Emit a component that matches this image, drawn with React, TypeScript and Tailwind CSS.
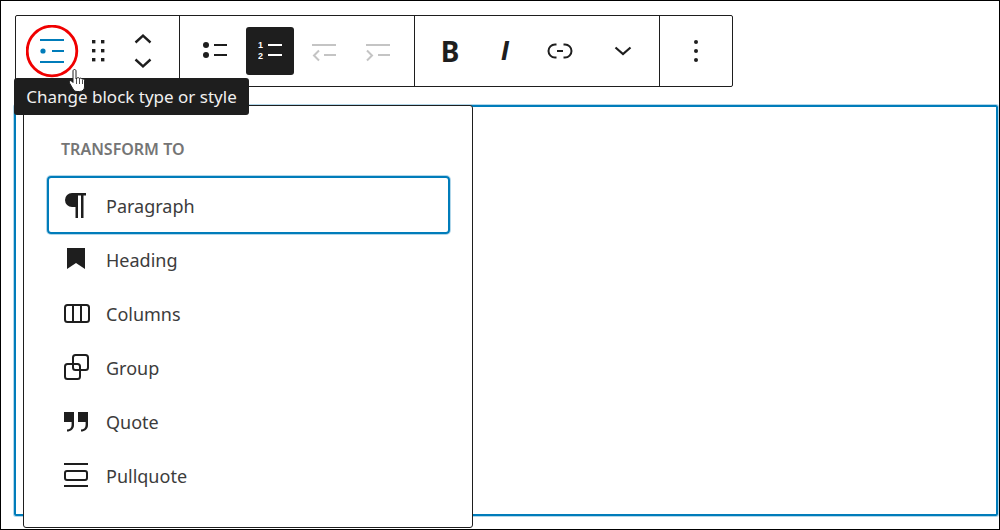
import React from 'react';

const FONT = "font-['Noto_Sans',sans-serif]";
const BLUE = '#007cba';
const DARK = '#1e1e1e';

const BlockIcon = () => (
  <svg width="24" height="24" viewBox="0 0 24 24" fill={BLUE}>
    <rect x="0" y="0" width="24" height="2" />
    <circle cx="3" cy="12" r="2.6" />
    <rect x="12" y="11" width="12" height="2" />
    <rect x="0" y="22" width="24" height="2" />
  </svg>
);

const DragIcon = () => (
  <svg width="13" height="22" viewBox="0 0 13 22" fill={DARK}>
    <rect x="0" y="0" width="3.4" height="3.4" />
    <rect x="9" y="0" width="3.4" height="3.4" />
    <rect x="0" y="9" width="3.4" height="3.4" />
    <rect x="9" y="9" width="3.4" height="3.4" />
    <rect x="0" y="18" width="3.4" height="3.4" />
    <rect x="9" y="18" width="3.4" height="3.4" />
  </svg>
);

const MoverIcon = () => (
  <svg width="18" height="34" viewBox="0 0 18 34" fill="none" stroke={DARK} strokeWidth="2.4">
    <path d="M1.500 8.500 9 1.700l7.500 6.800" />
    <path d="M1.500 25.500 9 32.300l7.500-6.800" />
  </svg>
);

const ListIcon = () => (
  <svg width="24" height="24" viewBox="0 0 24 24" fill={DARK}>
    <circle cx="3" cy="6" r="3" />
    <circle cx="3" cy="16" r="3" />
    <rect x="11" y="5" width="13" height="2" />
    <rect x="11" y="15" width="13" height="2" />
  </svg>
);

const NumberedIcon = () => (
  <svg width="24" height="24" viewBox="0 0 24 24" fill="#fff">
    <text x="0" y="9" fontSize="9" fontWeight="700" fontFamily="Liberation Sans, sans-serif">1</text>
    <text x="0" y="20" fontSize="9" fontWeight="700" fontFamily="Liberation Sans, sans-serif">2</text>
    <rect x="10" y="5" width="14" height="2" />
    <rect x="10" y="15" width="14" height="2" />
  </svg>
);

const OutdentIcon = () => (
  <svg width="24" height="24" viewBox="0 0 24 24" fill="#c4c4c4">
    <rect x="0" y="5" width="24" height="2" />
    <rect x="12" y="15" width="12" height="2" />
    <path d="M7 11.500 2 16.500l5 5" fill="none" stroke="#c4c4c4" strokeWidth="2" />
  </svg>
);

const IndentIcon = () => (
  <svg width="24" height="24" viewBox="0 0 24 24" fill="#c4c4c4">
    <rect x="0" y="5" width="24" height="2" />
    <rect x="12" y="15" width="12" height="2" />
    <path d="M1 11.500l5 5-5 5" fill="none" stroke="#c4c4c4" strokeWidth="2" />
  </svg>
);

const LinkIcon = () => (
  <svg width="28" height="18" viewBox="0 0 28 18" fill="none" stroke={DARK} strokeWidth="2">
    <path d="M10.500 2.500H9a6.500 6.500 0 0 0 0 13h1.500" />
    <path d="M17.500 2.500H19a6.500 6.500 0 0 1 0 13h-1.500" />
    <path d="M11 9h6" />
  </svg>
);

const ChevronIcon = () => (
  <svg width="18" height="10" viewBox="0 0 18 10" fill="none" stroke={DARK} strokeWidth="2.2">
    <path d="M1.500 1.500 9 8l7.500-6.500" />
  </svg>
);

const DotsIcon = () => (
  <svg width="6" height="24" viewBox="0 0 6 24" fill={DARK}>
    <circle cx="3" cy="3" r="2" />
    <circle cx="3" cy="12" r="2" />
    <circle cx="3" cy="21" r="2" />
  </svg>
);

const ItemIcon = ({ children }: { children: React.ReactNode }) => (
  <svg width="32" height="32" viewBox="0 0 32 32" fill={DARK} className="shrink-0">
    {children}
  </svg>
);

const items: { label: string; icon: React.ReactNode }[] = [
  { label: 'Paragraph', icon: <path d="M12 3h14v2.500h-2.500V28H21V5.500h-3V28h-2.500V17H12a7 7 0 0 1 0-14z" /> },
  { label: 'Heading', icon: <path d="M7 4h18v21l-9-6-9 6z" /> },
  {
    label: 'Columns',
    icon: (
      <g fill="none" stroke={DARK} strokeWidth="2">
        <rect x="5" y="7" width="24" height="17" rx="2.500" />
        <path d="M13 7v17M21 7v17" />
      </g>
    ),
  },
  {
    label: 'Group',
    icon: (
      <g fill="none" stroke={DARK} strokeWidth="2">
        <rect x="5" y="12" width="15" height="15" rx="2.500" />
        <rect x="13" y="3" width="15" height="15" rx="2.500" />
      </g>
    ),
  },
  {
    label: 'Quote',
    icon: (
      <>
        <path d="M4 6h10v13c0 4-3 6.500-7 6.500v-2c2.500 0 4.600-1.500 4.600-4.500V16H4z" />
        <path d="M18 6h10v13c0 4-3 6.500-7 6.500v-2c2.500 0 4.600-1.500 4.600-4.500V16H18z" />
      </>
    ),
  },
  {
    label: 'Pullquote',
    icon: (
      <>
        <rect x="4" y="3" width="24" height="2" />
        <rect x="5" y="11" width="22" height="9" rx="2" fill="none" stroke={DARK} strokeWidth="2" />
        <rect x="4" y="25" width="24" height="2" />
      </>
    ),
  },
];

export default function App() {
  return (
    <div className={`${FONT} relative w-[1000px] h-[530px] bg-white border border-black overflow-hidden`}>
      {/* block toolbar */}
      <div className="ml-[14px] mt-[14px] w-[718px] h-[72px] flex border border-[#1e1e1e] rounded-[2px] bg-white">
        <div className="w-[164px] flex items-center pl-[12px] border-r border-[#1e1e1e]">
          <button className="w-[48px] h-[48px] flex items-center justify-center"><BlockIcon /></button>
          <button className="w-[44px] h-[48px] flex items-center justify-center"><DragIcon /></button>
          <button className="w-[46px] h-[48px] flex items-center justify-center"><MoverIcon /></button>
        </div>
        <div className="w-[235px] flex items-center gap-[6px] pl-[11px] border-r border-[#1e1e1e]">
          <button className="w-[48px] h-[48px] flex items-center justify-center"><ListIcon /></button>
          <button className="w-[48px] h-[48px] ml-px flex items-center justify-center bg-[#1e1e1e] rounded-[3px]"><NumberedIcon /></button>
          <button className="w-[48px] h-[48px] flex items-center justify-center"><OutdentIcon /></button>
          <button className="w-[48px] h-[48px] flex items-center justify-center"><IndentIcon /></button>
        </div>
        <div className="w-[245px] flex items-center gap-[7px] pl-[11px] border-r border-[#1e1e1e]">
          <button className="w-[48px] h-[48px] flex items-center justify-center text-[28px] font-bold text-[#1e1e1e]">B</button>
          <button className="w-[48px] h-[48px] flex items-center justify-center font-['Liberation_Sans',sans-serif] text-[28px] font-bold italic text-[#1e1e1e]">I</button>
          <button className="w-[48px] h-[48px] flex items-center justify-center"><LinkIcon /></button>
          <button className="w-[48px] h-[48px] ml-[8px] flex items-center justify-center"><ChevronIcon /></button>
        </div>
        <div className="flex-1 flex items-center justify-center">
          <button className="w-[48px] h-[48px] flex items-center justify-center"><DotsIcon /></button>
        </div>
      </div>

      {/* selected block */}
      <div className="ml-[13px] mt-[18px] w-[984px] h-[411px] border-2 border-[#007cba] rounded-[2px] shadow-[0_0_0_1px_rgba(0,124,186,0.3)]" />

      {/* transform menu */}
      <div className="absolute left-[22px] top-[104px] w-[450px] h-[423px] bg-white border border-[#1e1e1e] rounded-[3px] pt-[34px] px-[23px]">
        <div className="pl-[14px] h-[18px] flex items-center text-[16px] font-semibold text-[#757575] uppercase">Transform to</div>
        <div className="mt-[18px] w-[403px] flex flex-col">
          {items.map((item, i) => (
            <div
              key={item.label}
              className={
                i === 0
                  ? 'h-[58px] -mb-px pt-[2px] flex items-center gap-[14px] pl-[11px] border-2 border-[#007cba] rounded-[4px] shadow-[0_0_0_1px_rgba(0,124,186,0.3)] text-[18px] text-[#3c3c3c]'
                  : 'h-[54px] flex items-center gap-[14px] pl-[13px] text-[18px] text-[#3c3c3c]'
              }
            >
              <ItemIcon>{item.icon}</ItemIcon>
              <span>{item.label}</span>
            </div>
          ))}
        </div>
      </div>

      {/* tooltip */}
      <div className="absolute left-[13px] top-[77px] w-[235px] h-[37px] bg-[#1e1e1e] rounded-[3px] flex items-center justify-center text-[17px] text-[#f0f0f0] whitespace-nowrap">
        Change block type or style
      </div>

      {/* annotation circle */}
      <svg className="absolute left-[25px] top-[24px]" width="54" height="54" viewBox="0 0 54 54" fill="none">
        <circle cx="26" cy="26" r="24.800" stroke="#f00000" strokeWidth="2.800" />
      </svg>

      {/* hand cursor */}
      <svg className="absolute left-[67px] top-[67px]" width="20" height="25" viewBox="0 0 20 25">
        <path
          d="M5 3c0-2 3-2 3 0v8l1-1c1-.7 2.500-.2 2.500.5.800-.7 2.300-.4 2.500.7.800-.5 2.300-.2 2.500 1V19c0 2.500-2 4.500-5 4.500H9c-2 0-3-1-4-2.500L1.500 15c-1-1.800 1-3 2-2L5 14.500z"
          fill="#fff"
          stroke="#222"
          strokeWidth="1"
        />
        <path d="M8.500 11v5M11.500 11v5M14.500 12v4" stroke="#222" strokeWidth="0.8" />
      </svg>
    </div>
  );
}
